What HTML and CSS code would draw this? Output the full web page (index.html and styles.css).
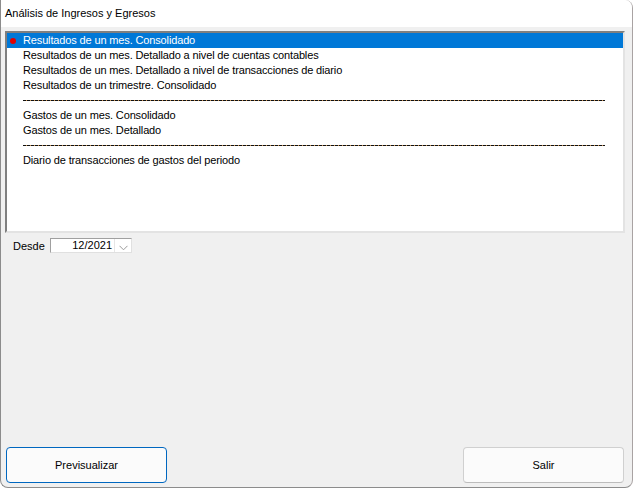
FILE: index.html
```html
<!DOCTYPE html>
<html lang="es">
<head>
<meta charset="utf-8">
<title>Análisis de Ingresos y Egresos</title>
<link rel="stylesheet" href="styles.css">
</head>
<body>
<div class="window">
  <div class="titlebar">Análisis de Ingresos y Egresos</div>
  <div class="client">
    <div class="listbox">
      <div class="item selected"><span class="dot"></span>Resultados de un mes. Consolidado</div>
      <div class="item">Resultados de un mes. Detallado a nivel de cuentas contables</div>
      <div class="item">Resultados de un mes. Detallado a nivel de transacciones de diario</div>
      <div class="item">Resultados de un trimestre. Consolidado</div>
      <div class="item sep"><span class="dashes"></span></div>
      <div class="item">Gastos de un mes. Consolidado</div>
      <div class="item">Gastos de un mes. Detallado</div>
      <div class="item sep"><span class="dashes"></span></div>
      <div class="item">Diario de transacciones de gastos del periodo</div>
    </div>
    <div class="daterow">
      <span class="label">Desde</span>
      <div class="datebox">
        <span class="dateval">12/2021</span>
        <span class="drop"><svg width="9" height="6" viewBox="0 0 9 6"><path d="M0.5 0.8 L4.5 4.8 L8.5 0.8" fill="none" stroke="#9a9a9a" stroke-width="1"/></svg></span>
      </div>
    </div>
    <div class="spacer"></div>
    <div class="buttons">
      <button class="btn primary">Previsualizar</button>
      <button class="btn">Salir</button>
    </div>
  </div>
</div>
</body>
</html>
```
FILE: styles.css
```css
html, body {
  margin: 0;
  padding: 0;
  background: #ffffff;
}
body {
  font-family: "Liberation Sans", Arial, sans-serif;
  font-size: 11px;
  color: #000;
}
.window {
  width: 633px;
  height: 488px;
  box-sizing: border-box;
  border: 1px solid #a9a3a3;
  border-top: none;
  border-left-color: #8c8c8c;
  border-bottom-color: #8c8c8c;
  border-radius: 0 8px 8px 8px;
  display: flex;
  flex-direction: column;
  overflow: hidden;
  background: #f0f0f0;
}
.titlebar {
  height: 27px;
  flex: none;
  background: #ffffff;
  padding-left: 4px;
  line-height: 26px;
}
.client {
  flex: 1;
  display: flex;
  flex-direction: column;
  padding: 4px 7px 4px 4px;
}
.listbox {
  height: 202px;
  box-sizing: border-box;
  background: #fff;
  border-top: 2px solid #7f7f7f;
  border-left: 2px solid #7f7f7f;
  border-right: 2px solid #e3e3e3;
  border-bottom: 2px solid #e3e3e3;
  padding: 0;
}
.item {
  height: 15px;
  line-height: 15px;
  padding-left: 16px;
  position: relative;
  white-space: nowrap;
  letter-spacing: -0.14px;
}
.item.selected {
  background: #0078d7;
  color: #fff;
}
.dot {
  position: absolute;
  left: 3px;
  top: 5px;
  width: 6px;
  height: 6px;
  border-radius: 50%;
  background: #e00000;
}
.item.sep {
  display: flex;
  align-items: center;
  padding-right: 18px;
}
.dashes {
  flex: 1;
  height: 1px;
  background: repeating-linear-gradient(90deg, #111 0 3px, #c89050 3px 4px);
}
.daterow {
  display: flex;
  align-items: center;
  margin-top: 5px;
  padding-left: 8px;
  height: 15px;
}
.label {
  width: 37px;
  flex: none;
}
.datebox {
  width: 82px;
  height: 15px;
  box-sizing: border-box;
  border: 1px solid #a0a0a0;
  border-right-color: #e0e0e0;
  border-bottom-color: #e0e0e0;
  background: #fff;
  display: flex;
  align-items: center;
}
.dateval {
  flex: 1;
  text-align: right;
  padding-right: 2px;
  line-height: 13px;
}
.drop {
  width: 17px;
  height: 13px;
  box-sizing: border-box;
  border-left: 1px solid #e6e6e6;
  display: flex;
  align-items: center;
  justify-content: center;
  padding-top: 4px;
}
.spacer {
  flex: 1;
}
.buttons {
  display: flex;
  justify-content: space-between;
  padding-left: 1px;
  padding-right: 1px;
}
.btn {
  width: 161px;
  height: 36px;
  box-sizing: border-box;
  font-family: "Liberation Sans", Arial, sans-serif;
  font-size: 11px;
  color: #000;
  background: #fbfbfb;
  border: 1px solid #d0d0d0;
  border-bottom-color: #bcbcbc;
  border-radius: 4px;
  padding: 0;
}
.btn.primary {
  border: 1px solid #0067c0;
}
```
